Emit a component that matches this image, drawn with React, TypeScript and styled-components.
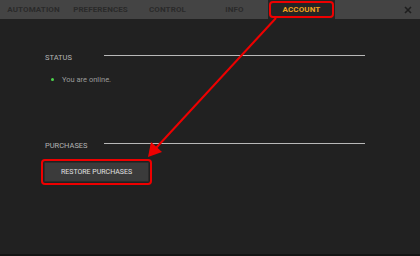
import React from 'react';
import styled, { createGlobalStyle } from 'styled-components';

const GlobalStyle = createGlobalStyle`
  html, body {
    margin: 0;
    padding: 0;
    background: #212121;
  }
  body {
    font-family: Roboto, "Liberation Sans", sans-serif;
  }
`;

const Screen = styled.div`
  position: relative;
  width: 420px;
  height: 256px;
  display: flex;
  flex-direction: column;
  background: #212121;
  overflow: hidden;
`;

const TabBar = styled.div`
  height: 19px;
  display: flex;
  align-items: stretch;
  background: #444444;
`;

const Tab = styled.div<{ $active?: boolean }>`
  width: 67px;
  display: flex;
  align-items: center;
  justify-content: center;
  font-size: 8px;
  font-weight: 700;
  letter-spacing: 0.1px;
  color: ${p => (p.$active ? '#f0a21c' : '#2a2a2a')};
  background: ${p => (p.$active ? '#242424' : 'transparent')};
  padding: ${p => (p.$active ? '1px' : '0')};
  box-sizing: border-box;
`;

const TabMark = styled.span`
  flex: 1;
  align-self: stretch;
  display: flex;
  align-items: center;
  justify-content: center;
  border: 2px solid #ee0000;
  border-radius: 4px;
`;

const CloseButton = styled.div`
  margin-left: auto;
  width: 20px;
  display: flex;
  align-items: center;
  justify-content: center;
  padding-right: 2px;
`;

const Content = styled.div`
  flex: 1;
  display: flex;
  flex-direction: column;
  padding: 33px 55px 0 45px;
`;

const SectionHead = styled.div<{ $top?: number }>`
  display: flex;
  align-items: center;
  height: 10px;
  margin-top: ${p => p.$top ?? 0}px;
`;

const SectionLabel = styled.span`
  width: 59px;
  font-size: 7.5px;
  color: #b4b4b4;
`;

const Rule = styled.span`
  flex: 1;
  height: 1.5px;
  margin-top: -3px;
  background: #b8b8b8;
`;

const StatusRow = styled.div`
  display: flex;
  align-items: center;
  height: 10px;
  margin-top: 12px;
  padding-left: 6px;
  gap: 8px;
`;

const Dot = styled.span`
  width: 3px;
  height: 3px;
  border-radius: 50%;
  background: #4cd44c;
`;

const StatusText = styled.span`
  font-size: 7.5px;
  color: #9a9a9a;
`;

const ButtonMark = styled.div`
  align-self: flex-start;
  margin-top: 9px;
  margin-left: -4px;
  padding: 1px;
  border: 2px solid #ee0000;
  border-radius: 4px;
  display: flex;
`;

const RestoreButton = styled.button`
  width: 105px;
  height: 20px;
  border: 1px solid #2c2c2c;
  border-radius: 1px;
  background: #3b3b3b;
  color: #e0e0e0;
  font-family: Roboto, "Liberation Sans", sans-serif;
  font-size: 7px;
  font-weight: 400;
  padding: 0;
`;

const BottomStrip = styled.div`
  height: 2px;
  background: #141414;
`;

const Annotation = styled.svg`
  position: absolute;
  left: 0;
  top: 0;
  pointer-events: none;
`;

const tabs = ['AUTOMATION', 'PREFERENCES', 'CONTROL', 'INFO'];

export default function App() {
  return (
    <>
      <GlobalStyle />
      <Screen>
        <TabBar>
          {tabs.map(t => (
            <Tab key={t}>{t}</Tab>
          ))}
          <Tab $active>
            <TabMark>ACCOUNT</TabMark>
          </Tab>
          <CloseButton>
            <svg width="8" height="8" viewBox="0 0 8 8">
              <path d="M1 1 L7 7 M7 1 L1 7" stroke="#1e1e1e" strokeWidth="1.6" />
            </svg>
          </CloseButton>
        </TabBar>
        <Content>
          <SectionHead>
            <SectionLabel>STATUS</SectionLabel>
            <Rule />
          </SectionHead>
          <StatusRow>
            <Dot />
            <StatusText>You are online.</StatusText>
          </StatusRow>
          <SectionHead $top={56}>
            <SectionLabel>PURCHASES</SectionLabel>
            <Rule />
          </SectionHead>
          <ButtonMark>
            <RestoreButton>RESTORE PURCHASES</RestoreButton>
          </ButtonMark>
        </Content>
        <BottomStrip />
        <Annotation width="420" height="256" viewBox="0 0 420 256">
          <line x1="276" y1="18" x2="156" y2="148" stroke="#ee0000" strokeWidth="2" />
          <polygon points="148,157 151,142 162,152" fill="#ee0000" />
        </Annotation>
      </Screen>
    </>
  );
}
